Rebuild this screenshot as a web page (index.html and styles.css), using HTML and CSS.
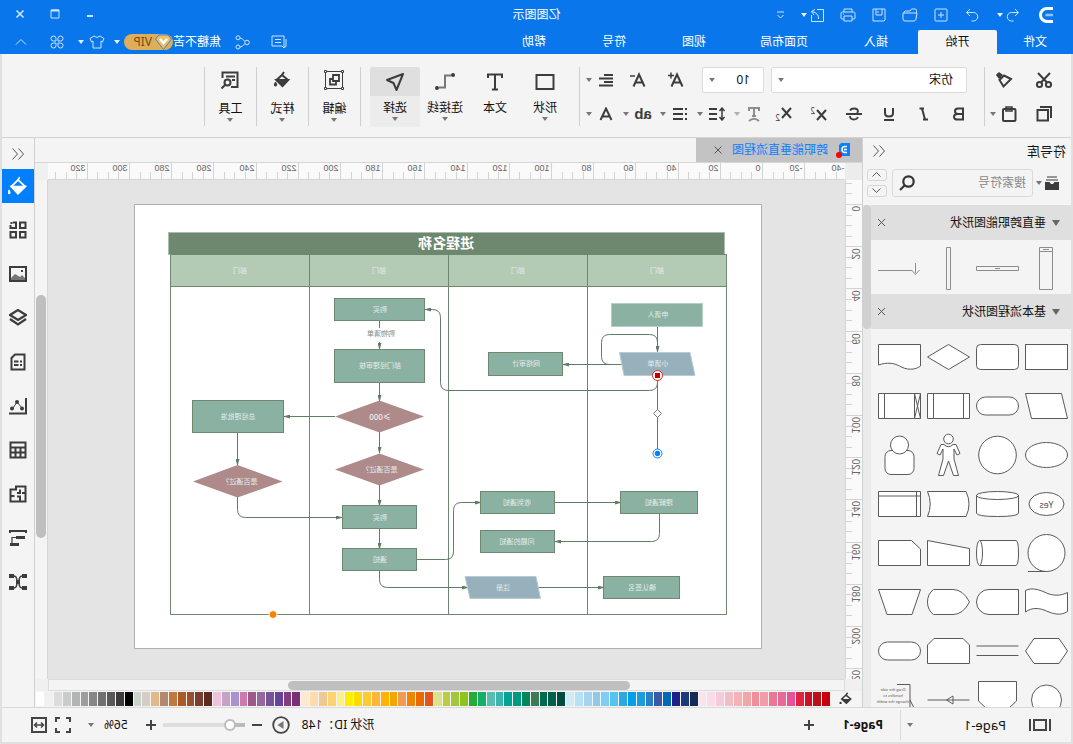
FILE: index.html
```html
<!DOCTYPE html>
<html lang="zh-CN">
<head>
<meta charset="utf-8">
<title>亿图图示</title>
<link rel="stylesheet" href="styles.css">
</head>
<body>
<div class="app">
  <header class="top">
    <div class="titlebar">
      <div class="quick">
        <svg class="logo" width="16" height="18" viewBox="0 0 16 18"><path d="M1 2.500H7A6.500 6.500 0 0 1 7 15.500H1" fill="none" stroke="#fff" stroke-width="3"/><path d="M1 9H8.500" stroke="#8cc5ff" stroke-width="2.500"/></svg>
        <button class="q" aria-label="撤销"><svg width="14" height="14" viewBox="0 0 14 14"><path d="M5 1L1.500 4.500L5 8M1.500 4.500H8.500a4 4 0 0 1 0 8.500H6.500"/></svg></button>
        <i class="caret light"></i>
        <button class="q" aria-label="重做"><svg width="14" height="14" viewBox="0 0 14 14"><path d="M9 1L12.500 4.500L9 8M12.500 4.500H5.500a4 4 0 0 0 0 8.500H7.500"/></svg></button>
        <button class="q" aria-label="新建"><svg width="14" height="14" viewBox="0 0 14 14"><rect x="1" y="1" width="12" height="12" rx="1"/><path d="M4 7H10M7 4V10"/></svg></button>
        <button class="q" aria-label="打开"><svg width="16" height="14" viewBox="0 0 16 14"><path d="M1.500 5V2.500Q1.500 1 3 1H6.500L8 3H12.500Q14 3 14 5M1.500 5H15V11Q15 13 13 13H4Q2.500 13 2 11L1 5Z"/></svg></button>
        <button class="q" aria-label="保存"><svg width="14" height="14" viewBox="0 0 14 14"><path d="M1 1H13V13H2L1 12ZM4 1V7H10V1M8 3V5"/></svg></button>
        <button class="q" aria-label="打印"><svg width="16" height="14" viewBox="0 0 16 14"><path d="M4 4V1H12V4M4 11H2Q1 11 1 10V5.500Q1 4 2.500 4H13.500Q15 4 15 5.500V10Q15 11 14 11H12M4 8H12V13H4ZM12 6H13"/></svg></button>
        <button class="q" aria-label="导出"><svg width="15" height="15" viewBox="0 0 15 15"><path d="M8 1.500H1.500V13.500H13.500V7M6.500 11Q6 5 13 3.500M10 1.500L13.500 3.500L11 7"/></svg></button>
        <i class="caret light"></i>
        <button class="q last" aria-label="自定义"><svg width="9" height="9" viewBox="0 0 9 9"><path d="M1 1H8M1.500 4L4.500 7L7.500 4"/></svg></button>
      </div>
      <h1>亿图图示</h1>
      <div class="win">
        <button aria-label="最小化"><svg width="10" height="10" viewBox="0 0 10 10"><path d="M2 7H8" stroke-width="2"/></svg></button>
        <button aria-label="最大化"><svg width="10" height="10" viewBox="0 0 10 10"><path d="M1 1H9V9H1Z"/><path d="M1 1.500H9" stroke-width="2"/></svg></button>
        <button aria-label="关闭"><svg width="10" height="10" viewBox="0 0 10 10"><path d="M1.500 1.500L8.500 8.500M8.500 1.500L1.500 8.500" stroke-width="1.600"/></svg></button>
      </div>
    </div>
    <nav class="menubar">
      <button class="file">文件</button>
      <button class="on">开始</button>
      <button>插入</button>
      <button class="wide">页面布局</button>
      <button>视图</button>
      <button>符号</button>
      <button>帮助</button>
      <div class="account">
        <svg width="16" height="14" viewBox="0 0 16 14"><path d="M1 4V11Q1 12 2 12H3M3 1H15V11H5L3 13ZM6 4.500H12M6 7.500H12"/></svg>
        <svg width="16" height="15" viewBox="0 0 16 15"><circle cx="3" cy="7.500" r="2.300"/><circle cx="12" cy="2.800" r="2"/><circle cx="12" cy="12" r="2"/><path d="M5 6.500L8 3.500L10 3M5 8.500L8 11.500L10 12"/></svg>
        <span class="user">焦糖不苦</span>
        <span class="vip"><svg width="17" height="16" viewBox="0 0 17 16"><path d="M4 1H13L16.500 5L8.500 15.500L.500 5Z" fill="#efc06b" stroke="#3d85d0"/><path d="M5 5L8.500 9L12 5" fill="none" stroke="#fff" stroke-width="2.400"/></svg>VIP</span>
        <i class="caret light"></i>
        <svg width="16" height="14" viewBox="0 0 16 14"><path d="M5 1Q8 4 11 1L15 3.500L13.500 7L12 6V13H4V6L2.500 7L1 3.500Z"/></svg>
        <i class="caret light"></i>
        <svg class="clover" width="14" height="14" viewBox="0 0 14 14"><path d="M6 6H3.500A2.500 2.500 0 1 1 6 3.500ZM8 6H10.500A2.500 2.500 0 1 0 8 3.500ZM6 8H3.500A2.500 2.500 0 1 0 6 10.500ZM8 8H10.500A2.500 2.500 0 1 1 8 10.500Z"/></svg>
        <svg width="12" height="8" viewBox="0 0 12 8"><path d="M1 6.500L6 1.500L11 6.500"/></svg>
      </div>
    </nav>
  </header>

  <div class="frame">
    <section class="ribbon">
      <div class="clip">
        <button aria-label="剪切"><svg width="18" height="18" viewBox="0 0 18 18"><circle cx="4.500" cy="13.500" r="2.600"/><circle cx="13.500" cy="13.500" r="2.600"/><path d="M3 2L12 11.500M15 2L6 11.500"/></svg></button>
        <button aria-label="格式刷"><svg width="18" height="18" viewBox="0 0 18 18"><path d="M2 8L9 4.500L13.500 9L9.500 15.500ZM12 7L16 3"/><path d="M10 4L14 1L17 4L14 8Z" fill="#3c3c3c" stroke="none"/></svg></button>
        <button aria-label="复制"><svg width="18" height="18" viewBox="0 0 18 18"><path d="M5 5H15.500V15.500H5ZM2 13V2H13"/></svg></button>
        <button aria-label="粘贴" class="paste"><svg width="16" height="18" viewBox="0 0 16 18"><rect x="1.500" y="4" width="12.500" height="12" rx="1"/><path d="M5 2H11V6H5Z" stroke-width="1.600"/></svg><i class="caret"></i></button>
      </div>
      <div class="format">
        <div class="row one">
          <label class="pick family"><select aria-label="字体"><option>仿宋</option></select><i class="caret"></i></label>
          <label class="pick size"><select aria-label="字号"><option>10</option></select><i class="caret"></i></label>
          <button class="grow" aria-label="增大字号"><svg width="18" height="16" viewBox="0 0 18 16"><path d="M2.500 14.500L8 2.500L13.500 14.500M5 10.500H11"/><path d="M11 3.500H17M14 .500V6.500" stroke-width="1.500"/></svg></button>
          <button class="grow" aria-label="减小字号"><svg width="18" height="16" viewBox="0 0 18 16"><path d="M2.500 14.500L8 2.500L13.500 14.500M5 10.500H11"/><path d="M12 4H17" stroke-width="1.500"/></svg></button>
          <button class="pair" aria-label="对齐"><svg width="16" height="14" viewBox="0 0 16 14"><path d="M1 2H10M1 5.500H15M1 9H10M1 12.500H15"/></svg><i class="caret"></i></button>
        </div>
        <div class="row two">
          <button class="b" aria-label="加粗"><svg width="14" height="14" viewBox="0 0 14 14"><path d="M3 1.500H8Q11 1.500 11 4.200T8 7H3ZM3 7H8.500Q12 7 12 9.800T8.500 12.500H3Z"/></svg></button>
          <button class="b" aria-label="斜体"><svg width="12" height="14" viewBox="0 0 12 14"><path d="M6 1.500H10.500M2 12.500H7M8 1.500L5 12.500"/></svg></button>
          <button class="b" aria-label="下划线"><svg width="14" height="14" viewBox="0 0 14 14"><path d="M3 1V6Q3 9.500 7 9.500T11 6V1M2 13H12"/></svg></button>
          <button class="b" aria-label="删除线"><svg width="16" height="14" viewBox="0 0 16 14"><path d="M12 3.500Q11 1.500 8 1.500Q4 1.500 4 4.500L5 6M12 9Q12 12.500 8 12.500Q5 12.500 4 10M0 7H16" stroke-width="1.800"/></svg></button>
          <button class="b" aria-label="上标"><svg width="18" height="16" viewBox="0 0 18 16"><path d="M2 4L11 14M11 4L2 14"/><text x="13" y="8">2</text></svg></button>
          <button class="b" aria-label="下标"><svg width="18" height="16" viewBox="0 0 18 16"><path d="M2 2L11 12M11 2L2 12"/><text x="13" y="15">2</text></svg></button>
          <button class="pair dim" aria-label="文字效果"><svg width="14" height="16" viewBox="0 0 14 16"><path d="M2 5V2H12V5M7 2V10M5 10H9M2 15Q7 10.500 12 15"/></svg><i class="caret"></i></button>
          <button class="pair" aria-label="行距"><svg width="18" height="14" viewBox="0 0 18 14"><path d="M9 2H17M9 7H17M9 12H17"/><path d="M4 1V13M1.500 4L4 1L6.500 4M1.500 10L4 13L6.500 10" stroke-width="1.500"/></svg><i class="caret"></i></button>
          <button class="pair" aria-label="列表"><svg width="16" height="14" viewBox="0 0 16 14"><path d="M1 2H3M5 2H15M1 7H3M5 7H15M1 12H3M5 12H15"/></svg><i class="caret"></i></button>
          <button class="pair" aria-label="大小写"><span class="ab">ab</span><i class="caret"></i></button>
          <button class="pair" aria-label="字体颜色"><svg width="14" height="14" viewBox="0 0 14 14"><path d="M1.500 13L7 1.500L12.500 13M4 9.500H10"/></svg><i class="caret"></i></button>
        </div>
      </div>
      <div class="tools">
        <button class="big"><svg width="20" height="20" viewBox="0 0 20 20"><rect x="1.500" y="3" width="17" height="14"/></svg>形状<i class="caret"></i></button>
        <button class="big"><svg width="20" height="20" viewBox="0 0 20 20"><path d="M3 6V2.500H17V6M10 2.500V17M7 17.500H13"/></svg>文本</button>
        <button class="big"><svg width="20" height="20" viewBox="0 0 20 20"><path d="M4 3.500H10V15.500H16" stroke="#777"/><circle cx="2" cy="3" r="2" fill="#3c3c3c" stroke="none"/><circle cx="18" cy="16" r="2" fill="#3c3c3c" stroke="none"/></svg>连接线<i class="caret"></i></button>
        <button class="big on"><svg width="20" height="20" viewBox="0 0 20 20"><path d="M2 2L18 8L11.500 11L8.500 18Z" stroke-linejoin="round"/></svg>选择<i class="caret"></i></button>
      </div>
      <button class="big solo"><svg width="20" height="20" viewBox="0 0 20 20"><path d="M1.500 1.500H18.500V18.500H1.500Z" stroke-width="1"/><path d="M5 5H11V11H5ZM11 9H14V14.500H8V11" stroke-width="1.800"/><path d="M.5 .5H2.500V2.500H.5ZM17.500 .5H19.500V2.500H17.500ZM.5 17.500H2.500V19.500H.5ZM17.500 17.500H19.500V19.500H17.500Z" fill="#f4f4f4" stroke-width="1"/></svg>编辑<i class="caret"></i></button>
      <button class="big solo"><svg width="18" height="18" viewBox="0 0 18 18"><path d="M7 1L9 4L14.500 9L8.500 14.500L3 9L9 4"/><path d="M3 9H14.500L8.500 15Z" fill="#3c3c3c"/><path d="M15.500 11Q18 15 15.500 15T15.500 11" fill="#3c3c3c" stroke-width="1"/></svg>样式<i class="caret"></i></button>
      <button class="big solo"><svg width="20" height="20" viewBox="0 0 20 20"><path d="M9 17H2.500V2.500H17.500V8M5 6.500H14M5 10H8"/><circle cx="12.500" cy="12.500" r="3"/><path d="M15 15L18.500 18.500"/></svg>工具<i class="caret"></i></button>
    </section>

    <main class="body">
      <aside class="library">
        <div class="lib-head"><h2>符号库</h2><button class="plain" aria-label="收起"><svg width="12" height="12" viewBox="0 0 12 12"><path d="M5.500 .500L.500 6L5.500 11.500M11.500 .500L6.500 6L11.500 11.500"/></svg></button></div>
        <div class="lib-search">
          <button class="plain shelf" aria-label="库"><svg width="14" height="14" viewBox="0 0 14 14"><path d="M2 1H12M1 4H13" stroke="#777" stroke-width="1.500"/><path d="M0 6H4.500L6 8H8L9.500 6H14V14H0Z" fill="#3c3c3c" stroke="none"/></svg><i class="caret"></i></button>
          <label class="find"><input type="text" placeholder="搜索符号" aria-label="搜索符号"><svg width="16" height="16" viewBox="0 0 16 16"><circle cx="6.500" cy="6.500" r="5.200"/><path d="M10.500 10.500L15 15"/></svg></label>
          <div class="updown">
            <button aria-label="上一个"><svg width="9" height="5" viewBox="0 0 9 5"><path d="M.500 4.500L4.500 .500L8.500 4.500"/></svg></button>
            <button aria-label="下一个"><svg width="9" height="5" viewBox="0 0 9 5"><path d="M.500 .500L4.500 4.500L8.500 .500"/></svg></button>
          </div>
        </div>
        <div class="lib-scroll">
          <div class="stencils">
            <h3><i class="tri"></i>垂直跨职能图形状<button class="plain" aria-label="关闭"><svg width="7" height="7" viewBox="0 0 7 7"><path d="M0 0L7 7M7 0L0 7"/></svg></button></h3>
            <div class="lanes">
              <svg viewBox="0 0 49 54"><path d="M18.500 7.500H31.500V49.500H18.500ZM18.500 11.500H31.500M22 9.500H28"/></svg>
              <svg viewBox="0 0 49 54"><path d="M3.500 26.500H45.500V30.500H3.500ZM22 28.500H27"/></svg>
              <svg viewBox="0 0 49 54"><path d="M22.500 7.500H26.500V49.500H22.500Z"/></svg>
              <svg viewBox="0 0 49 54"><path d="M12 30.500H46M8.500 23V33M4.500 30L8.500 34.500L12.500 30"/></svg>
            </div>
            <h3><i class="tri"></i>基本流程图形状<button class="plain" aria-label="关闭"><svg width="7" height="7" viewBox="0 0 7 7"><path d="M0 0L7 7M7 0L0 7"/></svg></button></h3>
            <div class="shapes">
              <svg viewBox="0 0 49 49"><rect x="3.500" y="12.500" width="42" height="25"/></svg>
              <svg viewBox="0 0 49 49"><rect x="3.500" y="12.500" width="42" height="25" rx="4"/></svg>
              <svg viewBox="0 0 49 49"><path d="M3.500 25L24.500 12.500L45.500 25L24.500 37.500Z"/></svg>
              <svg viewBox="0 0 49 49"><path d="M3.500 12.500H45.500V33C37 30 30 31 24.500 34C18 38 9 38.500 3.500 34Z"/></svg>
              <svg viewBox="0 0 49 49"><path d="M9.500 12.500H45.500L39.500 37.500H3.500Z"/></svg>
              <svg viewBox="0 0 49 49"><rect x="3.500" y="16" width="42" height="18" rx="9"/></svg>
              <svg viewBox="0 0 49 49"><path d="M3.500 12.500H45.500V37.500H3.500ZM9.500 12.500V37.500M39.500 12.500V37.500"/></svg>
              <svg viewBox="0 0 49 49"><path d="M3.500 12.500H45.500V37.500H3.500ZM9.500 12.500V37.500M39.500 12.500V37.500M3.500 12.500L9.500 37.500M9.500 12.500L3.500 37.500"/></svg>
              <svg viewBox="0 0 49 49"><ellipse cx="24.500" cy="25" rx="21" ry="12.500"/></svg>
              <svg viewBox="0 0 49 49"><circle cx="24.500" cy="25" r="18.800"/></svg>
              <svg viewBox="0 0 49 49"><circle cx="24.500" cy="9" r="4.800"/><path d="M20 14.500Q24.500 19 29 14.500H32L36 23.500L33 25L30 19V29L34.500 45.500H29.500L24.500 31L19.500 45.500H14.500L19 29V19L16 25L13 23.500L17 14.500Z"/></svg>
              <svg viewBox="0 0 49 49"><rect x="10" y="20.500" width="29" height="24" rx="6"/><circle cx="24.500" cy="15" r="9"/></svg>
              <svg viewBox="0 0 49 49"><ellipse cx="24.500" cy="25" rx="17.500" ry="11.500"/><text x="24.500" y="28.500" text-anchor="middle">Yes</text></svg>
              <svg viewBox="0 0 49 49"><path d="M3.500 16V34Q3.500 37.500 24.500 37.500T45.500 34V16"/><ellipse cx="24.500" cy="16.500" rx="21" ry="4"/></svg>
              <svg viewBox="0 0 49 49"><path d="M7 12.500H45.500Q40 25 45.500 37.500H7Q1 25 7 12.500Z"/></svg>
              <svg viewBox="0 0 49 49"><path d="M3.500 12.500H45.500V37.500H3.500ZM7.500 12.500V37.500M3.500 17H45.500"/></svg>
              <svg viewBox="0 0 49 49"><circle cx="24.500" cy="25" r="18.500"/><path d="M24.500 43.500H43"/></svg>
              <svg viewBox="0 0 49 49"><path d="M42.500 12.500H6Q3.500 13 3.500 25T6 37.500H42.500"/><ellipse cx="42.500" cy="25" rx="3" ry="12.500"/></svg>
              <svg viewBox="0 0 49 49"><path d="M3.500 20.500L45.500 12.500V37.500H3.500Z"/></svg>
              <svg viewBox="0 0 49 49"><path d="M12.500 12.500H45.500V37.500H3.500V21Z"/></svg>
              <svg viewBox="0 0 49 49"><path d="M3.500 15.500C10 19 18 19 24.500 16S39 10 45.500 13.500V35C39 30 31 31 24.500 34S10 39 3.500 34.500Z"/></svg>
              <svg viewBox="0 0 49 49"><path d="M3.500 12.500H33A12.500 12.500 0 0 1 33 37.500H3.500Z"/></svg>
              <svg viewBox="0 0 49 49"><path d="M3.500 25Q10 12.500 20 12.500H39.500Q45.500 17 45.500 25T39.500 37.500H20Q10 37.500 3.500 25Z"/></svg>
              <svg viewBox="0 0 49 49"><path d="M3.500 12.500H45.500L37 37.500H12Z"/></svg>
              <svg viewBox="0 0 49 49"><path d="M3.500 25L12 12.500H37L45.500 25L37 37.500H12Z"/></svg>
              <svg viewBox="0 0 49 49"><path d="M3.500 20H45.500M3.500 29.500H45.500"/></svg>
              <svg viewBox="0 0 49 49"><path d="M3.500 37.500V19L10 12.500H39L45.500 19V37.500Z"/></svg>
              <svg viewBox="0 0 49 49"><rect x="3.500" y="16" width="42" height="18" rx="9"/></svg>
              <svg viewBox="0 0 49 49"><circle cx="24.500" cy="25" r="15"/></svg>
              <svg viewBox="0 0 49 49"><path d="M5.500 6.500H43.500V26L24.500 44L5.500 26Z"/></svg>
              <svg viewBox="0 0 49 49"><path d="M3.500 25H45.500M20 21L26.500 25L20 29Z"/></svg>
              <svg viewBox="0 0 49 49"><path d="M27 9.500H14V49M14 25L8 37" fill="none"/><g class="hint"><text x="31" y="16">Drag the side</text><text x="31" y="22">handles to</text><text x="31" y="28">change the width</text></g></svg>
            </div>
          </div>
          <div class="track"><div class="thumb"></div></div>
        </div>
      </aside>

      <section class="work">
        <div class="tabs">
          <div class="tab"><svg width="18" height="16" viewBox="0 0 18 16"><path d="M3 1H12L14 3V14H3Z" fill="#0a80ff"/><path d="M6 4.500H8A3 3 0 0 1 8 10.500H6M6 7.500H9" fill="none" stroke="#fff" stroke-width="1.500"/><circle cx="14" cy="13" r="3" fill="#f00"/></svg><span>跨职能垂直流程图</span><button class="plain" aria-label="关闭"><svg width="8" height="8" viewBox="0 0 8 8"><path d="M.500 .500L7.500 7.500M7.500 .500L.500 7.500"/></svg></button></div>
        </div>
        <div class="stage">
          <div class="corner"></div>
          <svg class="ruler top-ruler" id="rulerX"></svg>
          <div class="gutter"></div>
          <svg class="ruler side-ruler" id="rulerY"></svg>
          <div class="canvas">
            <svg class="page" viewBox="0 0 628 445" width="628" height="445">
              <defs><marker id="arrow" viewBox="0 0 7 4" refX="6" refY="2" markerWidth="7" markerHeight="4" orient="auto" markerUnits="userSpaceOnUse"><path class="head" d="M0 0L7 2L0 4Z"/></marker></defs>
              <rect class="sheet" x=".5" y=".5" width="627" height="444"/>
              <rect class="bar" x="37.500" y="28.500" width="556" height="22"/>
              <rect class="lanehead" x="35.500" y="50.500" width="556" height="32"/>
              <path class="grid" d="M35.500 50.500H591.500V410.500H35.500ZM174.500 50.500V410.500M313.500 50.500V410.500M452.500 50.500V410.500M35.500 82.500H591.500"/>
              <g class="wire">
                <path marker-end="url(#arrow)" d="M104.500 123V148"/>
                <path d="M104.500 138.500Q104.500 130.500 112.500 130.500H152.500Q160.500 130.500 160.500 138.500V152.500Q160.500 160.500 152.500 160.500"/>
                <path marker-end="url(#arrow)" d="M139 160.500H199"/>
                <path marker-end="url(#arrow)" d="M104.500 171V178.500Q104.500 186.500 112.500 186.500H313.500Q321.500 186.500 321.500 178.500V113.500Q321.500 105.500 329.500 105.500H337"/>
                <path d="M104.500 171V249M382.500 117V124"/>
                <path marker-end="url(#arrow)" d="M382.500 138V145"/>
                <path marker-end="url(#arrow)" d="M382.500 179V197"/>
                <path marker-end="url(#arrow)" d="M427 212.500H478"/>
                <path marker-end="url(#arrow)" d="M524.500 229V261"/>
                <path marker-end="url(#arrow)" d="M524.500 293V305.500Q524.500 313.500 516.500 313.500H420"/>
                <path marker-end="url(#arrow)" d="M382.500 228V249"/>
                <path marker-end="url(#arrow)" d="M382.500 281V302"/>
                <path marker-end="url(#arrow)" d="M382.500 325V345"/>
                <path marker-end="url(#arrow)" d="M345 355.500H316.500Q308.500 355.500 308.500 347.500V306.500Q308.500 298.500 300.500 298.500H281"/>
                <path marker-end="url(#arrow)" d="M382.500 366V375.500Q382.500 383.500 374.500 383.500H294"/>
                <path marker-end="url(#arrow)" d="M224 383.500H158"/>
                <path marker-end="url(#arrow)" d="M207 298.500H141"/>
                <path marker-end="url(#arrow)" d="M102.500 309V329.500Q102.500 337.500 110.500 337.500H207"/>
              </g>
              <g class="soft"><rect x="59.500" y="99.500" width="91" height="23"/></g>
              <g class="box">
                <rect x="199.500" y="148.500" width="74" height="23"/><rect x="337.500" y="94.500" width="90" height="22"/><rect x="337.500" y="145.500" width="90" height="33"/>
                <rect x="345.500" y="301.500" width="74" height="23"/><rect x="345.500" y="344.500" width="74" height="22"/><rect x="478.500" y="196.500" width="91" height="32"/>
                <rect x="207.500" y="287.500" width="74" height="22"/><rect x="207.500" y="326.500" width="74" height="22"/>
                <rect x="64.500" y="287.500" width="77" height="22"/><rect x="82.500" y="372.500" width="76" height="22"/>
              </g>
              <g class="slant"><path d="M72 148.500H142.500L138 171.500H67Z"/><path d="M226 372.500H297L292 394.500H221.500Z"/></g>
              <g class="gate"><path d="M338 212.500L382.500 196.500L427 212.500L382.500 228.500Z"/><path d="M338 265.500L382.500 249.500L427 265.500L382.500 281.500Z"/><path d="M479.500 277.500L524.500 261L569 277.500L524.500 293.500Z"/></g>
              <text class="caption" x="316" y="44">进程名称</text>
              <g class="txt">
                <text x="105" y="69">部门</text><text x="244" y="69">部门</text><text x="383" y="69">部门</text><text x="522" y="69">部门</text>
                <text x="104" y="113">申请人</text><text x="104" y="162">小请单</text><text x="236" y="162">网络审计</text><text x="382" y="108">购买</text><text x="382" y="164">部门经理审核</text>
                <text x="382" y="268">是否通过？</text><text x="382" y="316">购买</text><text x="382" y="358">通知</text>
                <text x="524" y="215">总经理批准</text><text x="522" y="280">是否通过？</text><text x="245" y="301">收到通知</text><text x="245" y="340">问题的通知</text>
                <text x="259" y="386">注册</text><text x="103" y="301">理解通知</text><text x="120" y="386">确认签名</text>
                <text class="num" x="382" y="216">≥000</text><text class="ink" x="381" y="132">购物清单</text>
              </g>
              <path class="mid" d="M104.500 205.500L108.500 209.500L104.500 213.500L100.500 209.500Z"/>
              <circle cx="104.500" cy="171.500" r="5" fill="#fff" stroke="#e02020"/><rect x="102" y="169" width="5" height="5" fill="#c00000"/>
              <circle cx="104.500" cy="249.500" r="4.500" fill="#fff" stroke="#0a80ff"/><circle cx="104.500" cy="249.500" r="2.700" fill="#0a80ff"/>
              <circle cx="489" cy="410.500" r="4" fill="#ff8000" stroke="#fff"/>
            </svg>
          </div>
          <div class="vscroll"><div class="thumb"></div></div>
          <div class="gutter"></div>
          <div class="hscroll"><div class="thumb"></div></div>
          <div class="gutter"></div>
        </div>
        <div class="palette">
          <svg width="14" height="14" viewBox="0 0 18 18"><path d="M7 1L9 4L14.500 9L8.500 14.500L3 9L9 4" fill="none" stroke="#3c3c3c" stroke-width="2"/><path d="M3 9H14.500L8.500 15Z" fill="#3c3c3c"/><circle cx="16" cy="14" r="1.500" fill="#3c3c3c"/></svg>
          <div class="swatches" id="swatches"></div>
        </div>
      </section>

      <aside class="dock">
        <button class="fold" aria-label="展开"><svg width="12" height="12" viewBox="0 0 12 12"><path d="M5.500 .500L.500 6L5.500 11.500M11.500 .500L6.500 6L11.500 11.500"/></svg></button>
        <button class="on" aria-label="填充"><svg width="20" height="20" viewBox="0 0 18 18"><path d="M7.500 1L9 3.500L15 9.500L9 15.500L2.500 9.500L9 3.500"/><path d="M2.500 9.500H15L9 16Z" fill="#fff"/><path d="M17 12.500Q18.500 16 17 16T17 12.500" fill="#fff" stroke-width="1"/></svg></button>
        <button aria-label="组件"><svg width="18" height="18" viewBox="0 0 18 18"><path d="M1.500 1.500H7V7H1.500ZM1.500 11H7V16.500H1.500ZM11 11H16.500V16.500H11ZM14 1.500H11V7H16.500V4"/><path d="M15.500 1V3" stroke-width="2"/></svg></button>
        <button aria-label="图片"><svg width="18" height="16" viewBox="0 0 18 16"><path d="M1 1H17V15H1Z"/><path d="M2 14V12L5 9L7 11L12 8L16 12V14Z" fill="#777" stroke="none"/><path d="M4 4H6V6H4Z" fill="#3c3c3c" stroke="none"/></svg></button>
        <button aria-label="图层"><svg width="18" height="18" viewBox="0 0 18 18"><path d="M9 1L17 6L9 11L1 6ZM1 10L9 15.500L17 10" stroke-width="2.200"/></svg></button>
        <button aria-label="注释"><svg width="16" height="18" viewBox="0 0 16 18"><path d="M1.500 1.500H11L14.500 5V16.500H1.500ZM4 8.500H6M7.500 8.500H12M4 12H6M7.500 12H12"/></svg></button>
        <button aria-label="图表"><svg width="18" height="18" viewBox="0 0 18 18"><path d="M1 1V16.500H18"/><path d="M5 11L10 5L14 11" stroke-width="1"/><circle cx="5" cy="11.500" r="2" fill="#3c3c3c" stroke="none"/><circle cx="10" cy="5" r="2" fill="#3c3c3c" stroke="none"/><circle cx="15" cy="11.500" r="2" fill="#3c3c3c" stroke="none"/></svg></button>
        <button aria-label="表格"><svg width="18" height="18" viewBox="0 0 18 18"><path d="M1.500 1.500H16.500V16.500H1.500ZM1.500 6.500H16.500M1.500 11.500H16.500M6.500 6.500V16.500M11.500 6.500V16.500"/></svg></button>
        <button aria-label="平面图"><svg width="18" height="18" viewBox="0 0 18 18"><path d="M1.500 1.500H11V4.500H16.500V16.500H1.500ZM1.500 8H5M7 4.500V8H10M7 16V11.500H10M16 11H12.500"/></svg></button>
        <button aria-label="甘特图"><svg width="18" height="18" viewBox="0 0 18 18"><path d="M0 2H18M1 3V4M17 3V4" stroke-width="2"/><path d="M2 7H11V10H2ZM8 14H17V17H8Z" fill="#3c3c3c" stroke="none"/><path d="M11 8.500H15V14" stroke-width="1.200"/></svg></button>
        <button aria-label="思维导图"><svg width="18" height="18" viewBox="0 0 18 18"><path d="M5 3Q8 3 8 9T5 15M13 3Q10 3 10 9T13 15M7 9H11" stroke-width="1.500"/><path d="M0 1H5V5H0ZM13 1H18V5H13ZM0 13H5V17H0ZM13 13H18V17H13ZM7 7H11V11H7Z" fill="#3c3c3c" stroke="none"/></svg></button>
      </aside>
    </main>

    <footer class="status">
      <div class="pages">
        <button class="plain" aria-label="页面视图"><svg width="22" height="12" viewBox="0 0 22 12"><path d="M1 0V12M21 0V12"/><rect x="5" y="1" width="12" height="10" stroke-width="2"/></svg></button>
        <span>Page-1</span><i class="caret"></i>
      </div>
      <button class="pg">Page-1</button>
      <button class="plain plus" aria-label="添加页面"><svg width="10" height="10" viewBox="0 0 10 10"><path d="M0 5H10M5 0V10"/></svg></button>
      <div class="right">
        <span class="sid">形状 ID：148</span>
        <button class="plain" aria-label="播放"><svg width="18" height="18" viewBox="0 0 18 18"><circle cx="9" cy="9" r="7.800" stroke-width="1.800"/><path d="M6.500 5L12.500 9L6.500 13Z" fill="#777" stroke="none"/></svg></button>
        <button class="plain" aria-label="缩小"><svg width="10" height="10" viewBox="0 0 10 10"><path d="M0 5H10"/></svg></button>
        <input type="range" min="0" max="100" value="12" aria-label="缩放">
        <button class="plain" aria-label="放大"><svg width="10" height="10" viewBox="0 0 10 10"><path d="M0 5H10M5 0V10"/></svg></button>
        <span class="pct">56%</span><i class="caret"></i>
        <button class="plain full" aria-label="全屏"><svg width="16" height="16" viewBox="0 0 16 16"><path d="M1 5V1H5M11 1H15V5M15 11V15H11M5 15H1V11"/></svg></button>
        <button class="plain" aria-label="适合窗口"><svg width="16" height="16" viewBox="0 0 16 16"><path d="M1 1H15V15H1Z"/><path d="M4 8H12M6 5.500L3.500 8L6 10.500M10 5.500L12.500 8L10 10.500" stroke-width="1.500"/></svg></button>
      </div>
    </footer>
  </div>
</div>
<script src="app.js"></script>
</body>
</html>
```

FILE: styles.css
```css
* { box-sizing: border-box; }
html, body { height: 100%; margin: 0; }
body { overflow: hidden; background: #e0e0e0; }
button, input, select { font: inherit; color: inherit; margin: 0; padding: 0; border: 0; background: none; }
h1, h2, h3 { margin: 0; font-size: 12px; font-weight: 400; }
svg { flex: none; fill: none; }

/* the whole window is shown flipped left to right */
.app {
  height: 100vh; display: flex; flex-direction: column; transform: scaleX(-1);
  font: 12px/16px "Noto Sans", "Noto Sans CJK SC", sans-serif; color: #111;
}
.caret { flex: none; width: 0; height: 0; border: 3px solid transparent; border-top: 4px solid #777; border-bottom: 0; }
.caret.light { border-top-color: #e6f2ff; }
.plain { display: flex; align-items: center; justify-content: center; }

/* title and menu */
.top { flex: none; background: #0977eb; color: #fff; }
.top svg { stroke: #cfe5fc; }
.titlebar { display: grid; grid-template-columns: 1fr auto 1fr; height: 30px; align-items: center; }
.quick { display: flex; align-items: center; padding-left: 19px; }
.quick .logo { margin-right: 9px; stroke: none; }
.q { width: 31px; height: 24px; display: flex; align-items: center; justify-content: center; }
.quick .caret { margin: 0 -5px; }
.quick .caret + .q { margin-left: 14px; }
.quick .caret + .q.last { margin-left: 10px; }
.win { display: flex; justify-content: flex-end; padding-right: 3px; }
.win button { width: 35px; height: 24px; }
.menubar { display: flex; height: 24px; align-items: stretch; }
.menubar > button { width: 80px; margin-right: 4px; line-height: 24px; }
.menubar > .file { width: 76px; margin: 0; }
.menubar > .on { width: 79px; margin-right: 2px; background: #f4f4f4; color: #111; border-radius: 2px 2px 0 0; }
.menubar > .wide { width: 96px; }
.menubar > button:nth-child(n+5) { width: 76px; }
.account { flex: 1; display: flex; align-items: center; justify-content: flex-end; padding-right: 15px; }
.account > svg + svg { margin-left: 21px; }
.account .user { margin-left: 13px; }
.vip { display: flex; align-items: center; width: 49px; height: 16px; border-radius: 8px; background: #dfae58; color: #7a4a10; margin-right: 4px; padding-left: 1px; gap: 3px; }
.account > .caret + svg { margin: 0 5px 0 9px; }
.account > .caret + .clover { margin: 0 23px 0 14px; }
.account > .clover + svg { margin: 0; }

/* frame */
.frame { flex: 1; min-height: 0; display: flex; flex-direction: column; background: #f4f4f4; border: solid #e0e0e0; border-width: 0 2px 2px; }

/* ribbon */
.ribbon { flex: none; display: flex; align-items: flex-start; height: 84px; padding-top: 13px; border-bottom: 1px solid #d3d3d3; }
.ribbon svg { stroke: #3c3c3c; stroke-width: 2; }
.ribbon button { display: flex; align-items: center; justify-content: center; }
.clip { display: grid; grid-template-columns: 38px 42px; grid-template-rows: 25px 34px; width: 87px; padding-left: 8px; border-right: 1px solid #cfcfcf; }
.clip button { height: 25px; }
.clip button:nth-child(n+3) { align-self: end; }
.clip .paste { gap: 5px; }
.format { padding-left: 5px; border-right: 1px solid #cfcfcf; width: 405px; height: 59px; }
.row { display: flex; align-items: center; height: 25px; }
.row.one { padding-left: 12px; }
.row.two { margin-top: 9px; padding-left: 2px; }
.pick { display: flex; align-items: center; height: 26px; background: #fff; border: 1px solid #dcdcdc; border-radius: 2px; padding: 0 6px 0 13px; margin-right: 7px; }
.pick select { appearance: none; flex: 1; min-width: 0; outline: 0; }
.family { width: 196px; }
.size { width: 62px; }
.grow { width: 38px; height: 24px; }
.b { width: 35px; height: 24px; }
.pair { width: 37px; height: 24px; gap: 5px; }
.pair svg, .pair .ab { width: 18px; }
.ribbon svg text { font: 8px "Noto Sans", sans-serif; fill: #3c3c3c; stroke: none; }
.dim { opacity: .55; }
.ab { font: 700 15px/16px "Liberation Sans", sans-serif; color: #3c3c3c; }
.tools { display: flex; padding: 0 9px; border-right: 1px solid #cfcfcf; height: 59px; }
.ribbon .big { display: flex; flex-direction: column; justify-content: flex-start; width: 50px; height: 60px; padding-top: 5px; line-height: 14px; }
.ribbon .big svg { margin-bottom: 9px; height: 20px; }
.ribbon .big .caret { margin-top: 2px; }
.ribbon .big.on { background: linear-gradient(#dfdfdf 0 29px, #ececec 29px); border-radius: 2px; }
.ribbon .big.solo { width: 52px; height: 59px; padding-top: 3px; border-right: 1px solid #cfcfcf; }
.ribbon .big.solo svg { margin-bottom: 12px; }

/* body */
.body { flex: 1; min-height: 0; display: flex; }
.library { flex: none; width: 209px; display: flex; flex-direction: column; border-right: 1px solid #d0d0d0; }
.library svg, .plain svg, .dock svg { stroke: #555; }
.lib-head { display: flex; justify-content: space-between; align-items: center; height: 26px; padding: 0 10px 0 5px; }
.lib-head h2 { font-size: 13px; }
.lib-search { display: flex; align-items: center; height: 41px; padding: 0 4px 4px 12px; }
.shelf { gap: 3px; margin-right: 3px; }
.find { display: flex; align-items: center; flex: 1; min-width: 0; height: 28px; border: 1px solid #dadada; border-radius: 3px; padding: 0 6px 0 6px; margin-right: 5px; }
.find input { flex: 1; min-width: 0; outline: 0; }
.find input::placeholder { color: #888; opacity: 1; }
.find svg { stroke: #333; stroke-width: 2.2; }
.updown { display: flex; flex-direction: column; gap: 4px; }
.updown button { display: flex; align-items: center; justify-content: center; width: 20px; height: 12px; border: 1px solid #d6d6d6; border-radius: 3px; }
.lib-scroll { flex: 1; min-height: 0; display: flex; overflow: hidden; }
.stencils { flex: 1; min-width: 0; overflow: hidden; }
.stencils h3 { display: flex; align-items: center; height: 35px; background: #dfdfdf; padding: 0 7px 0 11px; }
.stencils h3 button { margin-left: auto; }
.tri { border: 4px solid transparent; border-top: 6px solid #666; border-bottom: 0; margin-right: 6px; }
.lanes, .shapes { display: grid; grid-template-columns: repeat(4, 49px); }
.lanes svg { width: 49px; height: 54px; stroke: #8c8c8c; }
.shapes { padding-top: 3px; }
.shapes svg { width: 49px; height: 49px; stroke: #5a5a5a; fill: #fff; }
.shapes text { font: 9px "Noto Sans", sans-serif; fill: #555; stroke: none; }
.shapes .hint text { font-size: 4px; text-anchor: middle; }
.track { flex: none; width: 8px; background: #ebebeb; }
.track .thumb { height: 124px; border-radius: 4px; background: #d0d0d0; }

.work { flex: 1; min-width: 0; display: flex; flex-direction: column; }
.tabs { flex: none; height: 25px; border-bottom: 1px solid #d6d6d6; }
.tab { display: flex; align-items: center; width: 166px; height: 24px; background: #c3c3c3; padding: 0 18px 0 9px; color: #0a80ff; }
.tab span { margin-left: 7px; }
.tab button { margin-left: auto; }
.stage { flex: 1; min-height: 0; display: grid; grid-template: 17px 1fr 12px / 17px 1fr 13px; }
.corner { background: #ececec; }
.ruler { width: 100%; height: 100%; background: #fafafa; overflow: hidden; }
.ruler path { stroke: #d3d3d3; }
.ruler text { font: 9px "Liberation Sans", sans-serif; fill: #666; }
.ruler.side-ruler text { font-size: 10px; }
.top-ruler { border-bottom: 1px solid #d6d6d6; }
.side-ruler { border-right: 1px solid #d6d6d6; }
.canvas { min-width: 0; min-height: 0; overflow: hidden; background: #e4e4e4; padding: 24px 0 0 83px; }
.page { display: block; }
.sheet { fill: #fff; stroke: #b0b0b0; }
.bar { fill: #6e886f; stroke: #a9bfab; }
.lanehead { fill: #b3cbb5; }
.grid { stroke: #6e886f; }
.wire { stroke: #5f7d63; }
.head { fill: #5f7d63; stroke: none; }
.box { fill: #8ab1a2; stroke: #6e886f; }
.soft { fill: #8ab1a2; stroke: #b5cfc5; }
.slant { fill: #97b1bc; stroke: #b9cbd2; }
.gate { fill: #ae8a8a; }
.mid { fill: #fff; stroke: #777; }
.caption { font: 700 14px "Noto Sans CJK SC", sans-serif; fill: #fff; text-anchor: middle; }
.txt { font: 7px "Noto Sans CJK SC", sans-serif; fill: #e3ecea; text-anchor: middle; }
.num { font-size: 8px; fill: #fff; }
.ink { fill: #7d8c82; }
.vscroll { border-left: 1px solid #d6d6d6; padding: 115px 1px 0; }
.vscroll .thumb { height: 243px; border-radius: 5px; background: #bfbfbf; }
.gutter { background: #f0f0f0; }
.hscroll { border: 1px solid #dcdcdc; padding: 1px 0 0 214px; }
.hscroll .thumb { width: 342px; max-width: 100%; height: 9px; border-radius: 5px; background: #bfbfbf; }
.palette { flex: none; display: flex; align-items: center; height: 16px; padding: 0 1px 0 9px; }
.swatches { flex: 1; display: flex; gap: 1px; margin-left: 9px; height: 14px; }
.swatches i { flex: 1; }

.dock { flex: none; width: 33px; display: flex; flex-direction: column; gap: 10px; border-left: 1px solid #d0d0d0; }
.dock button { display: flex; align-items: center; justify-content: center; height: 34px; }
.dock .fold { height: 31px; margin-bottom: -10px; }
.dock button:not(.fold) svg { stroke: #3c3c3c; stroke-width: 2; }
.dock .on { background: #0080ff; }
.dock button.on:not(.fold) svg { stroke: #fff; stroke-width: 1.5; }

/* status */
.status { flex: none; display: flex; align-items: center; height: 35px; border-top: 1px solid #d9d9d9; }
.status svg { stroke: #444; stroke-width: 2; }
.pages { display: flex; align-items: center; width: 171px; height: 30px; padding: 0 6px 0 20px; border-right: 1px solid #d9d9d9; font-size: 13px; }
.pages span { margin-left: 23px; }
.pages .caret { margin-left: auto; }
.pg { font-weight: 700; margin-left: 17px; }
.plus { margin-left: 29px; }
.right { display: flex; align-items: center; margin-left: auto; padding-right: 29px; }
.sid { margin-right: 12px; }
.right input { appearance: none; width: 82px; height: 12px; margin: 0 7px; background: linear-gradient(90deg, #bbb 14px, #dedede 14px) center / 100% 4px no-repeat; }
.right input::-webkit-slider-thumb { appearance: none; width: 12px; height: 12px; border-radius: 50%; border: 2px solid #bbb; background: #fff; }
.right button + button { margin-left: 10px; }
.pct { margin: 0 10px 0 18px; }
.right .full { margin-left: 17px; }
.right .full + button { margin-left: 8px; }
```

FILE: app.js
```js
const NS = "http://www.w3.org/2000/svg";
const STEP = 42.2;

function add(parent, name, attrs, text) {
  const el = document.createElementNS(NS, name);
  for (const key in attrs) el.setAttribute(key, attrs[key]);
  if (text !== undefined) el.textContent = text;
  parent.appendChild(el);
}

// horizontal ruler: zero sits at the page's left edge
const rx = document.getElementById("rulerX");
const spanX = rx.clientWidth || 797;
for (let i = -8; ; i++) {
  const x = Math.round(82 + i * STEP / 4) + 0.5;
  if (x > spanX) break;
  add(rx, "path", { d: i % 4 ? `M${x} 9V17` : `M${x} 0V17` });
  if (i % 4 === 0 && x + 16 < spanX) add(rx, "text", { x: x + 2, y: 8 }, i * 5);
}

// vertical ruler: labels read from bottom to top
const ry = document.getElementById("rulerY");
const spanY = ry.clientHeight || 499;
for (let i = -2; ; i++) {
  const y = Math.round(24 + i * STEP / 4) + 0.5;
  if (y > spanY) break;
  add(ry, "path", { d: i % 4 ? `M10 ${y}H17` : `M0 ${y}H17` });
  if (i % 4 === 0) {
    const label = String(i * 5);
    const end = y + 1 + Math.ceil(label.length * 5.6);
    add(ry, "text", { x: 0, y: 0, transform: `translate(10 ${end}) rotate(-90)` }, label);
  }
}

const colors = ("c7000b b8121b cf1126 e0243f e85298 e86a9a ea7793 f19ca7 ee8f9a f4a6a6 f5b3b5 f2bcc8 f6c9dc fadce6 fbe3ec " +
  "172a58 1d3a78 1d2088 0068b7 3b5aa6 2a7fc5 1b9be0 00a0e9 2ea7e0 54c3f1 7ecef4 90c8e8 a5d4f0 b8e0f5 d0ebf8 " +
  "004d40 00604a 006b4f 3f7a56 00885a 009a80 00a497 3db5ae 57bfb2 13ae67 22ac38 8fc31f a4c53f bccb44 dbe28c " +
  "e3531f ec6800 f08304 f39a54 f1a600 ffb300 fdb738 fbca34 fedb00 ffee00 fcf182 fcd36f ebca96 fddcab fde8d0 " +
  "7b2f74 823d80 66429a 775494 9569a0 9b5a88 cd7baf aa92cf c5a3c7 ecc3db " +
  "5c2b1f 783c31 98502d ab5a2a c07a3f b2886f dfb988 d6ccc6 c9d3ca " +
  "000000 3e3a39 595757 707070 868686 9c9e9d b3b5b4 cacccb dcdcdc f0f0f0 ffffff").split(" ");
const box = document.getElementById("swatches");
for (const c of colors) {
  const i = document.createElement("i");
  i.style.background = "#" + c;
  box.appendChild(i);
}
```
